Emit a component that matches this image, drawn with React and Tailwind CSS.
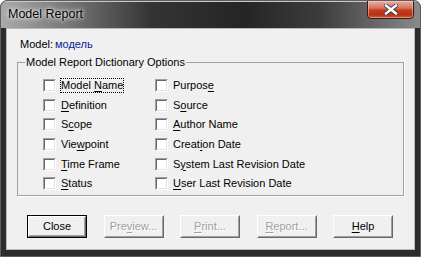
import React from 'react';

const U = ({ children }) => <span className="underline underline-offset-[2px]">{children}</span>;

const leftOptions = [
    { id: 'name', label: <>Model <U>N</U>ame</>, focused: true },
    { id: 'def', label: <><U>D</U>efinition</> },
    { id: 'scope', label: <>S<U>c</U>ope</> },
    { id: 'view', label: <>Vie<U>w</U>point</> },
    { id: 'time', label: <><U>T</U>ime Frame</> },
    { id: 'status', label: <><U>S</U>tatus</> },
];

const rightOptions = [
    { id: 'purpose', label: <>Purpos<U>e</U></> },
    { id: 'source', label: <>S<U>o</U>urce</> },
    { id: 'author', label: <><U>A</U>uthor Name</> },
    { id: 'created', label: <>Creat<U>i</U>on Date</> },
    { id: 'sysrev', label: <>S<U>y</U>stem Last Revision Date</> },
    { id: 'userrev', label: <><U>U</U>ser Last Revision Date</> },
];

const CheckBox = () => (
    <div className="w-[13px] h-[13px] shrink-0 border border-t-[#a0a0a0] border-l-[#a0a0a0] border-b-white border-r-white">
        <div className="w-full h-full bg-white border border-t-[#696969] border-l-[#696969] border-b-[#e3e3e3] border-r-[#e3e3e3]" />
    </div>
);

const OptionRow = ({ option }) => (
    <div className="h-[19.6px] flex items-center gap-[5px]">
        <CheckBox />
        <span className={option.focused ? 'leading-[13px] outline-1 outline-dotted outline-black' : 'leading-[13px]'}>
            {option.label}
        </span>
    </div>
);

const DialogButton = ({ children, disabled, isDefault }) => (
    <div className={`w-[60px] h-[23px] ${isDefault ? 'border border-black' : ''}`}>
        <div className="w-full h-full border border-t-white border-l-white border-b-[#696969] border-r-[#696969]">
            <div className="w-full h-full flex items-center justify-center border border-t-[#f0f0f0] border-l-[#f0f0f0] border-b-[#a0a0a0] border-r-[#a0a0a0] bg-[#f0f0f0]">
                <span className={disabled ? 'text-[#a0a0a0] [text-shadow:1px_1px_0_#fff]' : 'text-black'}>
                    {children}
                </span>
            </div>
        </div>
    </div>
);

const CloseGlyph = () => (
    <svg width="14" height="11" viewBox="0 0 14 11">
        <path d="M2 1.5 L12 9.5 M12 1.5 L2 9.5" stroke="#3a3a4a" strokeWidth="4.2" strokeLinecap="square" />
        <path d="M2 1.5 L12 9.5 M12 1.5 L2 9.5" stroke="#ffffff" strokeWidth="2.4" strokeLinecap="square" />
    </svg>
);

export default function App() {
    return (
        <div className="w-[421px] h-[257px] flex flex-col rounded-t-[7px] border border-[#5e5e5e] bg-[#2c2c2c] overflow-hidden font-['Liberation_Sans',Arial,sans-serif] text-[11px] text-black">
            <div className="h-[27px] shrink-0 flex justify-between pl-[7px] pr-[6px] bg-[linear-gradient(90deg,#aaaaaa_0%,#7a7a7a_15%,#343434_36%,#252525_58%,#3c3c3c_76%,#8a8a8a_100%)] shadow-[inset_0_1px_0_#c9c9c9]">
                <span className="self-center text-[12.5px] text-black [text-shadow:0_0_6px_#fff,0_0_3px_#fff]">Model Report</span>
                <div className="w-[47px] h-[19px] -mt-px flex items-center justify-center rounded-b-[4px] border border-[#3a1a14] bg-[linear-gradient(180deg,#e9b2a6_0%,#d7735f_40%,#c13d22_55%,#b8300f_80%,#d25a35_100%)] shadow-[inset_0_0_0_1px_rgba(255,220,210,0.45)]">
                    <CloseGlyph />
                </div>
            </div>

            <div className="flex-1 flex flex-col mx-[5px] mb-[6px] border border-[#b9b9b9] bg-[#f0f0f0]">
                <div className="flex items-center h-[13px] mt-[9px] pl-[13px] leading-[13px]">
                    <span className="w-[35px] shrink-0">Model:</span>
                    <span className="text-[#0a1a96]">модель</span>
                </div>

                <fieldset className="mt-[5px] mx-[10px] h-[140px] border border-[#a0a0a0] shadow-[1px_1px_0_#fff]">
                    <legend className="ml-[7px] px-[1px] leading-[13px]">Model Report Dictionary Options</legend>
                    <div className="flex pt-[7px] pl-[25px]">
                        <div className="w-[112px] flex flex-col">
                            {leftOptions.map((o) => <OptionRow key={o.id} option={o} />)}
                        </div>
                        <div className="flex flex-col">
                            {rightOptions.map((o) => <OptionRow key={o.id} option={o} />)}
                        </div>
                    </div>
                </fieldset>

                <div className="flex gap-[16.5px] pl-[20px] mt-[19px]">
                    <DialogButton isDefault>Close</DialogButton>
                    <DialogButton disabled>Pre<U>v</U>iew...</DialogButton>
                    <DialogButton disabled><U>P</U>rint...</DialogButton>
                    <DialogButton disabled><U>R</U>eport...</DialogButton>
                    <DialogButton><U>H</U>elp</DialogButton>
                </div>
            </div>
        </div>
    );
}
